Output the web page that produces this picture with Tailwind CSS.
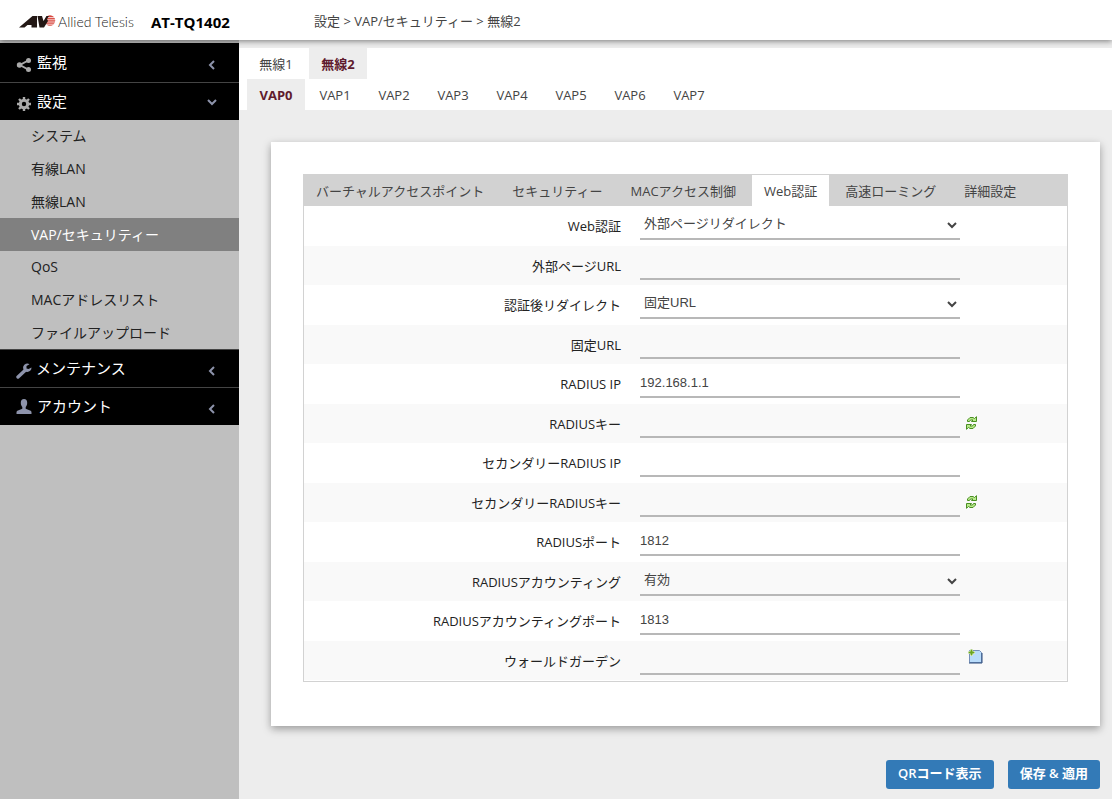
<!DOCTYPE html>
<html lang="ja">

<head>
    <meta charset="UTF-8">
    <meta name="viewport" content="width=device-width, initial-scale=1.0">
    <title>AT-TQ1402</title>
    <script src="https://cdn.jsdelivr.net/npm/@tailwindcss/browser@4"></script>
</head>

<body class="min-h-screen flex flex-col bg-[#ededed] text-[13px] leading-5 text-[#444] font-['Open_Sans','Noto_Sans_CJK_JP',sans-serif]">
    <!-- icons -->
    <svg class="hidden">
        <symbol id="chevron-left" viewBox="0 0 10 10">
            <path d="M7 1 3 5l4 4" fill="none" stroke="currentColor" stroke-width="2" />
        </symbol>
        <symbol id="chevron-down" viewBox="0 0 10 10">
            <path d="M1 3l4 4 4-4" fill="none" stroke="currentColor" stroke-width="2" />
        </symbol>
        <symbol id="refresh" viewBox="0 0 13 14">
            <path d="M2.500 5.500V4L5 1.500H8l1.500 1L11.500.7V5.500H6.500L8 4H5.500L4.500 5.500z" fill="#b9ea8c" stroke="#4a8f22" />
            <path d="M10.500 8.500V10L8 12.500H5l-1.500-1-2 1.800V8.500H6.500L5 10H7.500L8.500 8.500z" fill="#b9ea8c" stroke="#4a8f22" />
        </symbol>
    </svg>

    <header class="relative z-10 h-10 flex items-center bg-white shadow-[0_1px_6px_rgba(0,0,0,0.5)]">
        <div class="w-[239px] pl-[19px] pt-1 flex items-center shrink-0">
            <svg class="w-[37px] h-[14px]" viewBox="0 0 37 14">
                <circle cx="31" cy="5.500" r="5.200" fill="#d8453c" />
                <path d="M24 2.600h13M24 4.800h13M24 7h13M24 9.200h13" stroke="#fff" stroke-width=".8" />
                <path d="M0 12.500 13.500 1H18v11.500h-5.500V10H8.500l-3 2.500zM18.500 1h4.500l1.500 5L27.500 1H30l-2 3 1 2-4 6.500h-4.500z" fill="#231815" />
            </svg>
            <span class="w-[76px] ml-[2px] text-sm text-[#222] whitespace-nowrap font-light font-['Lato',sans-serif]">Allied Telesis</span>
            <span class="ml-[17px] text-[15px] font-bold text-black">AT-TQ1402</span>
        </div>
        <p class="ml-[75px] pt-[2px]">設定 &gt; VAP/セキュリティー &gt; 無線2</p>
    </header>

    <div class="flex-1 flex">
        <nav class="w-[239px] shrink-0 pt-[3px] bg-[#bfbfbf] text-[#222] text-sm">
            <a href="#" class="h-10 px-4 flex items-center bg-black text-white text-[15px] border-b border-[#444]">
                <svg class="w-4 h-4 mt-1 mr-[5px] text-[#aaa]" viewBox="0 0 16 16" fill="currentColor">
                    <path d="M13 3 4 8l9 5" fill="none" stroke="currentColor" stroke-width="2" />
                    <circle cx="12.500" cy="3.500" r="2.500" />
                    <circle cx="3.500" cy="8" r="2.700" />
                    <circle cx="12.500" cy="12.500" r="2.500" />
                </svg>
                監視
                <svg class="w-[10px] h-[10px] mt-1 ml-auto mr-[6px] text-[#8d93ab]"><use href="#chevron-left" /></svg>
            </a>
            <a href="#" class="h-[37px] px-4 flex items-center bg-black text-white text-[15px]">
                <svg class="w-4 h-4 mt-1 mr-[5px] text-[#aaa]" viewBox="0 0 16 16">
                    <circle cx="8" cy="8" r="3.700" fill="none" stroke="currentColor" stroke-width="3" />
                    <path d="M8 1v3M8 12v3M1 8h3M12 8h3M3 3l2 2M11 11l2 2M13 3l-2 2M5 11l-2 2" stroke="currentColor" stroke-width="2.400" />
                </svg>
                設定
                <svg class="w-[10px] h-[10px] ml-auto mr-[6px] text-[#8d93ab]"><use href="#chevron-down" /></svg>
            </a>
            <ul>
                <li><a href="#" class="h-8 pl-[31px] flex items-center">システム</a></li>
                <li><a href="#" class="h-[33px] pl-[31px] flex items-center">有線LAN</a></li>
                <li><a href="#" class="h-[33px] pl-[31px] flex items-center">無線LAN</a></li>
                <li><a href="#" class="h-[33px] pl-[31px] flex items-center bg-[#808080] text-white">VAP/セキュリティー</a></li>
                <li><a href="#" class="h-8 pl-[31px] flex items-center">QoS</a></li>
                <li><a href="#" class="h-[33px] pl-[31px] flex items-center">MACアドレスリスト</a></li>
                <li><a href="#" class="h-[33px] pl-[31px] flex items-center">ファイルアップロード</a></li>
            </ul>
            <a href="#" class="h-[38px] px-4 flex items-center bg-black text-white text-[15px] border-t border-[#444]">
                <svg class="w-4 h-4 mt-1 mr-1 text-[#8d93ab]" viewBox="0 0 16 16">
                    <path d="M2 14 9 7.500" stroke="currentColor" stroke-width="3.400" stroke-linecap="round" />
                    <path d="M13.500 1.200A4.200 4.200 0 1 0 15.500 4.500L12.500 6 10.500 5.500V3z" fill="currentColor" />
                </svg>
                メンテナンス
                <svg class="w-[10px] h-[10px] mt-1 ml-auto mr-[6px] text-[#8d93ab]"><use href="#chevron-left" /></svg>
            </a>
            <a href="#" class="h-[38px] px-4 flex items-center bg-black text-white text-[15px] border-t border-[#444]">
                <svg class="w-4 h-4 mr-[5px] text-[#8d93ab]" viewBox="0 0 16 16" fill="currentColor">
                    <path d="M8 0c2.200 0 3.200 1.500 3.200 3.700 0 2-.7 3.300-1.500 4.300v1.800l4.300 1.700c1 .4 1.500 1 1.500 2V15H.5v-1.500c0-1 .5-1.600 1.500-2l4.300-1.700V8C5.500 7 4.800 5.700 4.800 3.700 4.800 1.500 5.800 0 8 0z" />
                </svg>
                アカウント
                <svg class="w-[10px] h-[10px] mt-1 ml-auto mr-[6px] text-[#8d93ab]"><use href="#chevron-left" /></svg>
            </a>
        </nav>

        <main class="flex-1 min-w-0 pt-2">
            <div class="bg-white pl-2 text-center">
                <div class="flex gap-1">
                    <a href="#" class="w-[58px] h-[31px] leading-8">無線1</a>
                    <a href="#" class="w-[58px] h-[31px] leading-8 bg-[#ededed] font-bold text-[#5f1b2d]">無線2</a>
                </div>
                <div class="flex gap-px">
                    <a href="#" class="w-[58px] h-[31px] leading-8 bg-[#ededed] font-bold text-[#5f1b2d]">VAP0</a>
                    <a href="#" class="w-[58px] h-[31px] leading-8">VAP1</a>
                    <a href="#" class="w-[58px] h-[31px] leading-8">VAP2</a>
                    <a href="#" class="w-[58px] h-[31px] leading-8">VAP3</a>
                    <a href="#" class="w-[58px] h-[31px] leading-8">VAP4</a>
                    <a href="#" class="w-[58px] h-[31px] leading-8">VAP5</a>
                    <a href="#" class="w-[58px] h-[31px] leading-8">VAP6</a>
                    <a href="#" class="w-[58px] h-[31px] leading-8">VAP7</a>
                </div>
            </div>

            <form class="mt-8 ml-8 mr-3">
                <div class="bg-white px-8 pt-8 pb-11 shadow-[0_3px_8px_rgba(0,0,0,0.35)]">
                    <div class="border border-[#d2d2d2] pb-px">
                        <div class="flex gap-1 bg-[#d2d2d2] whitespace-nowrap">
                            <a href="#" class="h-[31px] px-3 leading-8">バーチャルアクセスポイント</a>
                            <a href="#" class="h-[31px] px-3 leading-8">セキュリティー</a>
                            <a href="#" class="h-[31px] px-3 leading-8">MACアクセス制御</a>
                            <a href="#" class="h-[31px] px-3 leading-8 bg-white">Web認証</a>
                            <a href="#" class="h-[31px] px-3 leading-8">高速ローミング</a>
                            <a href="#" class="h-[31px] px-3 leading-8">詳細設定</a>
                        </div>
                        <table class="w-full">
                            <tbody class="[&_th]:w-[43%] [&_th]:p-0 [&_th]:pr-[11px] [&_th]:text-right [&_th]:font-normal [&_th]:text-[#222] [&_td]:p-0 [&_td]:pl-2 [&_td]:pt-1 [&_td]:align-top [&_input]:w-80 [&_input]:h-[30px] [&_input]:border-b-2 [&_input]:border-[#b8b8b8] [&_select]:w-80 [&_select]:h-[30px] [&_select]:pb-[2px] [&_select]:border-b-2 [&_select]:border-[#b8b8b8] [&_input]:font-['Liberation_Sans','Noto_Sans_CJK_JP',sans-serif] [&_select]:font-['Liberation_Sans','Noto_Sans_CJK_JP',sans-serif]">
                                <tr class="h-10">
                                    <th><label for="webAuth">Web認証</label></th>
                                    <td><select id="webAuth"><option>外部ページリダイレクト</option></select></td>
                                </tr>
                                <tr class="h-[39px] bg-[#f9f9f9]">
                                    <th><label for="extUrl">外部ページURL</label></th>
                                    <td><input type="text" id="extUrl"></td>
                                </tr>
                                <tr class="h-10">
                                    <th><label for="redirect">認証後リダイレクト</label></th>
                                    <td><select id="redirect"><option>固定URL</option></select></td>
                                </tr>
                                <tr class="h-[39px] bg-[#f9f9f9]">
                                    <th><label for="fixedUrl">固定URL</label></th>
                                    <td><input type="text" id="fixedUrl"></td>
                                </tr>
                                <tr class="h-10">
                                    <th><label for="radiusIp">RADIUS IP</label></th>
                                    <td><input type="text" id="radiusIp" value="192.168.1.1"></td>
                                </tr>
                                <tr class="h-[39px] bg-[#f9f9f9]">
                                    <th><label for="radiusKey">RADIUSキー</label></th>
                                    <td>
                                        <div class="flex items-center gap-[5px]">
                                            <input type="password" id="radiusKey">
                                            <button type="button" aria-label="RADIUSキーを表示"><svg class="w-[13px] h-[14px]"><use href="#refresh" /></svg></button>
                                        </div>
                                    </td>
                                </tr>
                                <tr class="h-10">
                                    <th><label for="radiusIp2">セカンダリーRADIUS IP</label></th>
                                    <td><input type="text" id="radiusIp2"></td>
                                </tr>
                                <tr class="h-[39px] bg-[#f9f9f9]">
                                    <th><label for="radiusKey2">セカンダリーRADIUSキー</label></th>
                                    <td>
                                        <div class="flex items-center gap-[5px]">
                                            <input type="password" id="radiusKey2">
                                            <button type="button" aria-label="セカンダリーRADIUSキーを表示"><svg class="w-[13px] h-[14px]"><use href="#refresh" /></svg></button>
                                        </div>
                                    </td>
                                </tr>
                                <tr class="h-10">
                                    <th><label for="radiusPort">RADIUSポート</label></th>
                                    <td><input type="text" id="radiusPort" value="1812"></td>
                                </tr>
                                <tr class="h-[39px] bg-[#f9f9f9]">
                                    <th><label for="accounting">RADIUSアカウンティング</label></th>
                                    <td><select id="accounting"><option>有効</option></select></td>
                                </tr>
                                <tr class="h-10">
                                    <th><label for="accountingPort">RADIUSアカウンティングポート</label></th>
                                    <td><input type="text" id="accountingPort" value="1813"></td>
                                </tr>
                                <tr class="h-[39px] bg-[#f9f9f9]">
                                    <th><label for="walledGarden">ウォールドガーデン</label></th>
                                    <td>
                                        <div class="flex items-start gap-2">
                                            <input type="text" id="walledGarden">
                                            <button type="button" aria-label="追加" class="pt-1">
                                                <svg class="w-[15px] h-[15px]" viewBox="0 0 15 15">
                                                    <path d="M1.500 1.500h10l2 2v10h-12z" fill="#b9dcfb" stroke="#7590b8" />
                                                    <path d="M1 14h13V4" fill="none" stroke="#2b4a7d" />
                                                    <path d="M3.500 0v7M0 3.500h7" stroke="#fff" stroke-width="3" />
                                                    <path d="M3.500 0.500v6M0.500 3.500h6" stroke="#6aa51f" stroke-width="2" />
                                                </svg>
                                            </button>
                                        </div>
                                    </td>
                                </tr>
                            </tbody>
                        </table>
                    </div>
                </div>

                <div class="mt-[34px] flex justify-end gap-[14px] text-white font-semibold">
                    <button type="button" class="h-[29px] px-3 pb-1 rounded-[3px] bg-[#337ab7]">QRコード表示</button>
                    <button type="submit" class="h-[29px] px-3 pb-1 rounded-[3px] bg-[#337ab7]">保存 &amp; 適用</button>
                </div>
            </form>
        </main>
    </div>
</body>

</html>
